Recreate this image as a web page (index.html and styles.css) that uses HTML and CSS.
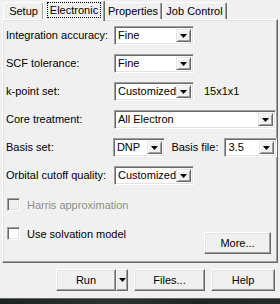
FILE: index.html
```html
<!DOCTYPE html>
<html lang="en">
<head>
  <meta charset="UTF-8" />
  <title>Electronic</title>
  <link rel="stylesheet" href="styles.css">
</head>
<body>
  <div class="window">
    <div class="tabs">
      <div class="tab tab-setup">Setup</div>
      <div class="tab tab-active"><span class="focus">Electronic</span></div>
      <div class="tab tab-props">Properties</div>
      <div class="tab tab-job">Job Control</div>
    </div>

    <div class="panel">
      <div class="row">
        <span class="label">Integration accuracy:</span>
        <div class="combo combo-short"><span class="value">Fine</span><span class="drop"><svg width="7" height="4"><polygon points="0,0 7,0 3.5,4" fill="#000"/></svg></span></div>
      </div>
      <div class="row">
        <span class="label">SCF tolerance:</span>
        <div class="combo combo-short"><span class="value">Fine</span><span class="drop"><svg width="7" height="4"><polygon points="0,0 7,0 3.5,4" fill="#000"/></svg></span></div>
      </div>
      <div class="row">
        <span class="label">k-point set:</span>
        <div class="combo combo-short"><span class="value">Customized</span><span class="drop"><svg width="7" height="4"><polygon points="0,0 7,0 3.5,4" fill="#000"/></svg></span></div>
        <span class="extra">15x1x1</span>
      </div>
      <div class="row">
        <span class="label">Core treatment:</span>
        <div class="combo combo-wide"><span class="value">All Electron</span><span class="drop"><svg width="7" height="4"><polygon points="0,0 7,0 3.5,4" fill="#000"/></svg></span></div>
      </div>
      <div class="row">
        <span class="label">Basis set:</span>
        <div class="combo combo-tiny"><span class="value">DNP</span><span class="drop"><svg width="7" height="4"><polygon points="0,0 7,0 3.5,4" fill="#000"/></svg></span></div>
        <span class="inline-label">Basis file:</span>
        <div class="combo combo-tiny"><span class="value">3.5</span><span class="drop"><svg width="7" height="4"><polygon points="0,0 7,0 3.5,4" fill="#000"/></svg></span></div>
      </div>
      <div class="row">
        <span class="label">Orbital cutoff quality:</span>
        <div class="combo combo-short"><span class="value">Customized</span><span class="drop"><svg width="7" height="4"><polygon points="0,0 7,0 3.5,4" fill="#000"/></svg></span></div>
      </div>

      <div class="check check-disabled">
        <span class="box"></span>
        <span>Harris approximation</span>
      </div>

      <div class="check-row">
        <div class="check">
          <span class="box"></span>
          <span>Use solvation model</span>
        </div>
        <button class="btn btn-more">More...</button>
      </div>
    </div>

    <div class="actions">
      <div class="split">
        <button class="btn btn-run">Run</button>
        <button class="btn btn-arrow"><svg width="7" height="4"><polygon points="0,0 7,0 3.5,4" fill="#000"/></svg></button>
      </div>
      <button class="btn btn-files">Files...</button>
      <button class="btn btn-help">Help</button>
    </div>

    <div class="taskbar"></div>
  </div>
</body>
</html>
```

FILE: styles.css
```css
*, *::before, *::after {
  box-sizing: border-box;
}

html, body {
  margin: 0;
  padding: 0;
}

body {
  background: #f0f0f0;
  font-family: "Liberation Sans", Arial, sans-serif;
  font-size: 11px;
  color: #000;
}

.window {
  width: 280px;
  height: 304px;
  overflow: hidden;
  display: flex;
  flex-direction: column;
}

/* tab strip */

.tabs {
  display: flex;
  align-items: flex-end;
  height: 19px;
  padding-left: 3px;
}

.tab {
  height: 17px;
  display: flex;
  align-items: center;
  justify-content: center;
  border-top: 1px solid #fff;
  border-left: 1px solid #fff;
  border-right: 1px solid #696969;
  box-shadow: inset -1px 0 #a0a0a0;
  border-radius: 2px 2px 0 0;
  white-space: nowrap;
}

.tab-setup {
  width: 41px;
}

.tab-props {
  width: 58px;
}

.tab-job {
  width: 65px;
}

.tab-active {
  position: relative;
  z-index: 1;
  width: 62px;
  height: 21px;
  margin: 0 -1px -2px -1px;
  padding-bottom: 3px;
  background: #f0f0f0;
}

.focus {
  outline: 1px dotted #000;
  padding: 1px 2px;
}

/* tab body */

.panel {
  width: 276px;
  height: 244px;
  margin-left: 2px;
  padding: 6px 0 0 3px;
  border-top: 1px solid #fff;
  border-left: 1px solid #fff;
  border-right: 1px solid #696969;
  border-bottom: 1px solid #696969;
  box-shadow: inset -1px -1px #a0a0a0, inset 1px 1px #e3e3e3;
}

.row {
  display: flex;
  align-items: flex-start;
  height: 28px;
}

.label {
  width: 108px;
  line-height: 19px;
  white-space: nowrap;
}

.inline-label {
  margin: 0 6px;
  line-height: 19px;
  white-space: nowrap;
}

.extra {
  margin-left: 10px;
  line-height: 19px;
}

.combo {
  display: flex;
  height: 19px;
  background: #fff;
  border-top: 1px solid #a0a0a0;
  border-left: 1px solid #a0a0a0;
  border-right: 1px solid #fff;
  border-bottom: 1px solid #fff;
  box-shadow: inset 1px 1px #696969, inset -1px -1px #e3e3e3;
  padding: 2px;
}

.combo-short {
  width: 80px;
}

.combo-wide {
  width: 162px;
}

.combo-tiny {
  width: 53px;
}

.value {
  flex: 1;
  padding-left: 1px;
  line-height: 13px;
  white-space: nowrap;
  overflow: hidden;
}

.drop {
  width: 15px;
  height: 13px;
  display: flex;
  align-items: center;
  justify-content: center;
  background: #f0f0f0;
  border-top: 1px solid #e3e3e3;
  border-left: 1px solid #e3e3e3;
  border-right: 1px solid #696969;
  border-bottom: 1px solid #696969;
  box-shadow: inset 1px 1px #fff, inset -1px -1px #a0a0a0;
}

/* checkboxes */

.check {
  display: flex;
  align-items: center;
  gap: 7px;
  height: 19px;
  padding-left: 1px;
}

.check-disabled {
  margin-top: 1px;
  color: #8d8d8d;
}

.box {
  width: 13px;
  height: 13px;
  background: #fff;
  border-top: 1px solid #a0a0a0;
  border-left: 1px solid #a0a0a0;
  border-right: 1px solid #fff;
  border-bottom: 1px solid #fff;
  box-shadow: inset 1px 1px #696969, inset -1px -1px #e3e3e3;
}

.check-disabled .box {
  background: #f0f0f0;
}

.check-row {
  display: flex;
  align-items: flex-start;
  justify-content: space-between;
  margin-top: 10px;
  padding-right: 6px;
}

/* buttons */

.btn {
  height: 22px;
  padding: 0;
  font-family: inherit;
  font-size: 11px;
  color: #000;
  background: #f0f0f0;
  border-top: 1px solid #fff;
  border-left: 1px solid #fff;
  border-right: 1px solid #696969;
  border-bottom: 1px solid #696969;
  box-shadow: inset -1px -1px #a0a0a0, inset 1px 1px #e3e3e3;
}

.btn-more {
  width: 67px;
  margin-top: 8px;
}

.actions {
  display: flex;
  justify-content: flex-end;
  gap: 6px;
  margin-top: 6px;
  padding-right: 5px;
}

.split {
  display: flex;
}

.btn-run {
  width: 60px;
}

.btn-arrow {
  width: 12px;
  display: flex;
  align-items: center;
  justify-content: center;
}

.btn-files {
  width: 71px;
}

.btn-help {
  width: 64px;
}

.taskbar {
  margin-top: 7px;
  height: 6px;
  border-top: 1px solid #6a6a6a;
  background: linear-gradient(90deg, #1d2220, #2b3430 40%, #1e2624 70%, #242b29);
}
```
